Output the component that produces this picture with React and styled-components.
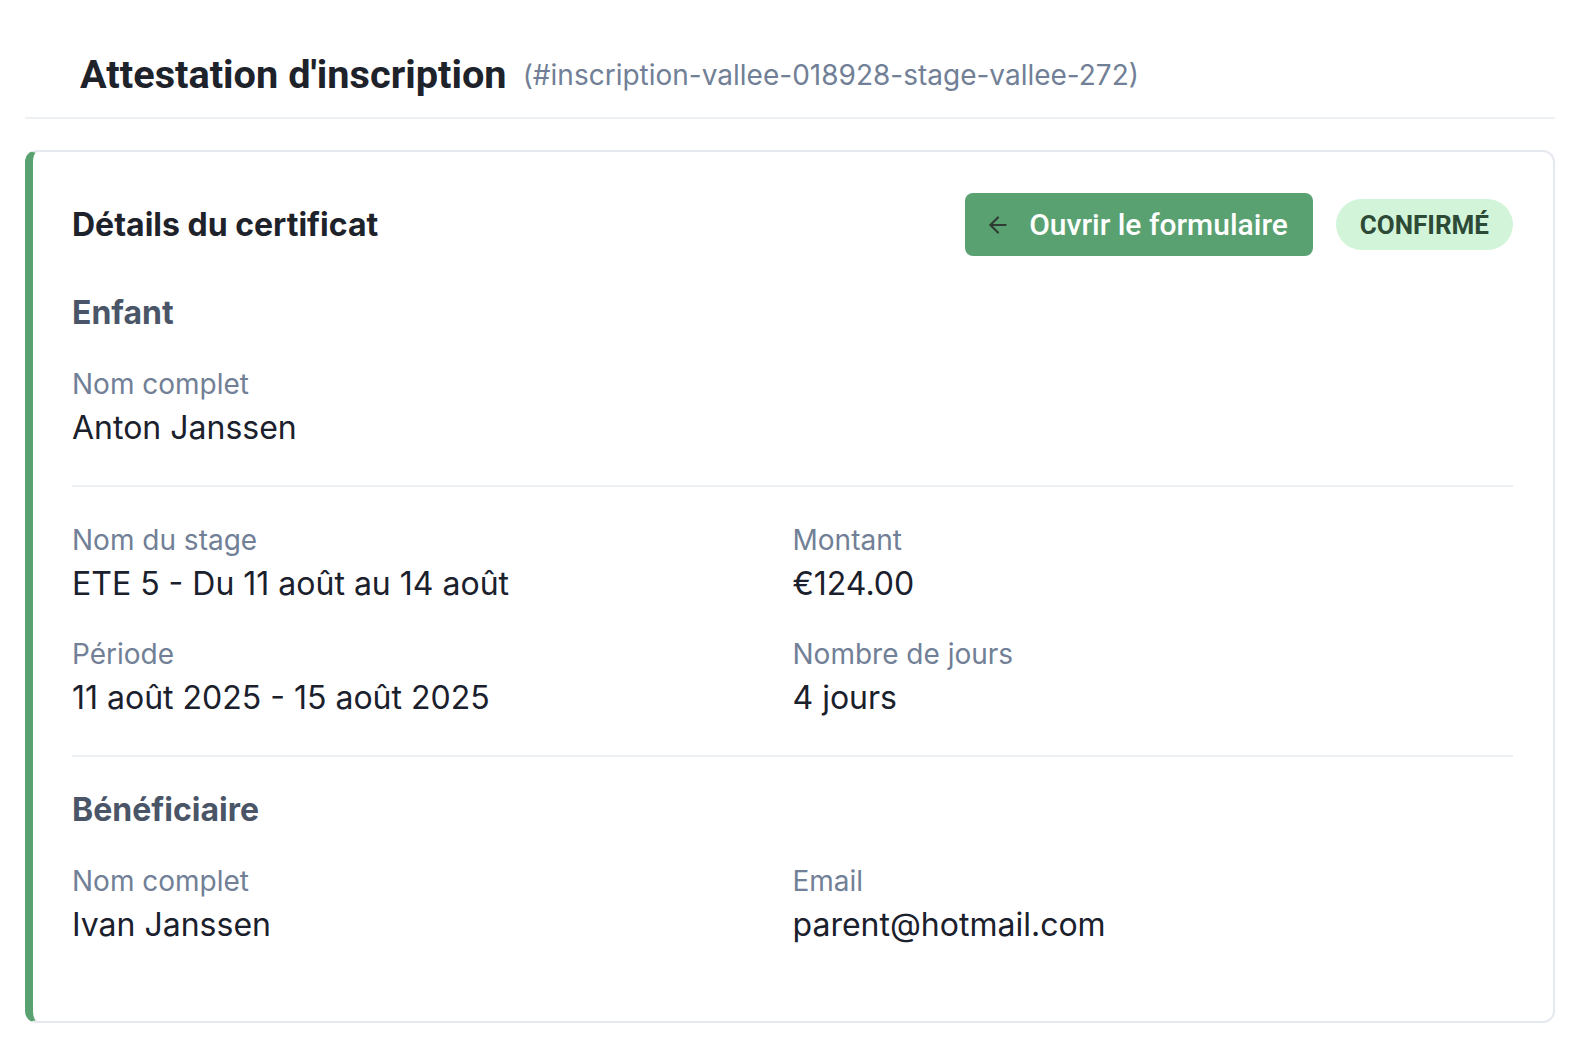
import React from 'react';
import styled, { createGlobalStyle } from 'styled-components';

const GlobalStyle = createGlobalStyle`
  body {
    margin: 0;
    background: #ffffff;
    font-family: Inter, "Noto Sans", sans-serif;
    -webkit-font-smoothing: antialiased;
  }
`;

const Page = styled.div`
  padding: 0 37px 0 25px;
`;

const Header = styled.header`
  display: flex;
  align-items: center;
  gap: 16px;
  padding: 51px 0 18px 55px;
  border-bottom: 2px solid #eef1f4;
`;

const Title = styled.h1`
  margin: 0;
  font-family: Roboto, "Liberation Sans", sans-serif;
  font-weight: 700;
  font-size: 39.7px;
  line-height: 48px;
  color: #1e222b;
`;

const Reference = styled.span`
  font-family: Inter, sans-serif;
  font-size: 28px;
  line-height: 48px;
  color: #718096;
`;

const Card = styled.section`
  margin-top: 31px;
  border: 2px solid #e5e8ee;
  border-left: 8px solid #5aa171;
  border-radius: 12px;
  padding: 41px 40px 72px 39px;
`;

const CardHeader = styled.div`
  display: flex;
  align-items: center;
  gap: 23px;
`;

const CardTitle = styled.h2`
  margin: 0;
  flex: 1;
  font-size: 32px;
  font-weight: 700;
  color: #1e222b;
`;

const OpenButton = styled.button`
  display: flex;
  align-items: center;
  gap: 18px;
  height: 63px;
  padding: 0 25px 0 20px;
  border: none;
  border-radius: 8px;
  background: #5aa171;
  color: #ffffff;
  font-family: Roboto, sans-serif;
  font-weight: 500;
  font-size: 30px;
  cursor: pointer;
`;

const Badge = styled.span`
  display: inline-flex;
  align-items: center;
  height: 51px;
  padding: 0 24px;
  border-radius: 26px;
  background: #d2f5da;
  color: #2d4a36;
  font-family: Roboto, sans-serif;
  font-weight: 700;
  font-size: 26px;
`;

const Section = styled.div`
  padding-top: ${p => p.$first ? '37px' : '0'};
`;

const SectionTitle = styled.h3`
  margin: 0 0 31px;
  font-size: 32px;
  line-height: 40px;
  font-weight: 700;
  color: #4a5568;
`;

const Divider = styled.hr`
  margin: 33px 0;
  border: none;
  border-top: 2px solid #edf0f3;
`;

const Grid = styled.div`
  display: grid;
  grid-template-columns: 1fr 1fr;
  row-gap: 26px;
`;

const Field = styled.div`
  display: flex;
  flex-direction: column;
`;

const Label = styled.span`
  font-size: 28px;
  line-height: 40px;
  color: #718096;
`;

const Value = styled.span`
  font-size: 32px;
  line-height: 48px;
  color: #1a202c;
`;

const ArrowLeft = () => (
  <svg width="26" height="26" viewBox="0 0 24 24" fill="none" stroke="#2f3b33" strokeWidth="2" strokeLinecap="round" strokeLinejoin="round">
    <path d="M19 12H5" />
    <path d="M12 19l-7-7 7-7" />
  </svg>
);

const InfoField = ({ label, value }) => (
  <Field>
    <Label>{label}</Label>
    <Value>{value}</Value>
  </Field>
);

export default function App() {
  return (
    <>
      <GlobalStyle />
      <Page>
        <Header>
          <Title>Attestation d'inscription</Title>
          <Reference>(#inscription-vallee-018928-stage-vallee-272)</Reference>
        </Header>
        <Card>
          <CardHeader>
            <CardTitle>Détails du certificat</CardTitle>
            <OpenButton>
              <ArrowLeft />
              Ouvrir le formulaire
            </OpenButton>
            <Badge>CONFIRMÉ</Badge>
          </CardHeader>

          <Section $first>
            <SectionTitle>Enfant</SectionTitle>
            <InfoField label="Nom complet" value="Anton Janssen" />
          </Section>

          <Divider />

          <Grid>
            <InfoField label="Nom du stage" value="ETE 5 - Du 11 août au 14 août" />
            <InfoField label="Montant" value="€124.00" />
            <InfoField label="Période" value="11 août 2025 - 15 août 2025" />
            <InfoField label="Nombre de jours" value="4 jours" />
          </Grid>

          <Divider />

          <Section>
            <SectionTitle>Bénéficiaire</SectionTitle>
            <Grid>
              <InfoField label="Nom complet" value="Ivan Janssen" />
              <InfoField label="Email" value="parent@hotmail.com" />
            </Grid>
          </Section>
        </Card>
      </Page>
    </>
  );
}
